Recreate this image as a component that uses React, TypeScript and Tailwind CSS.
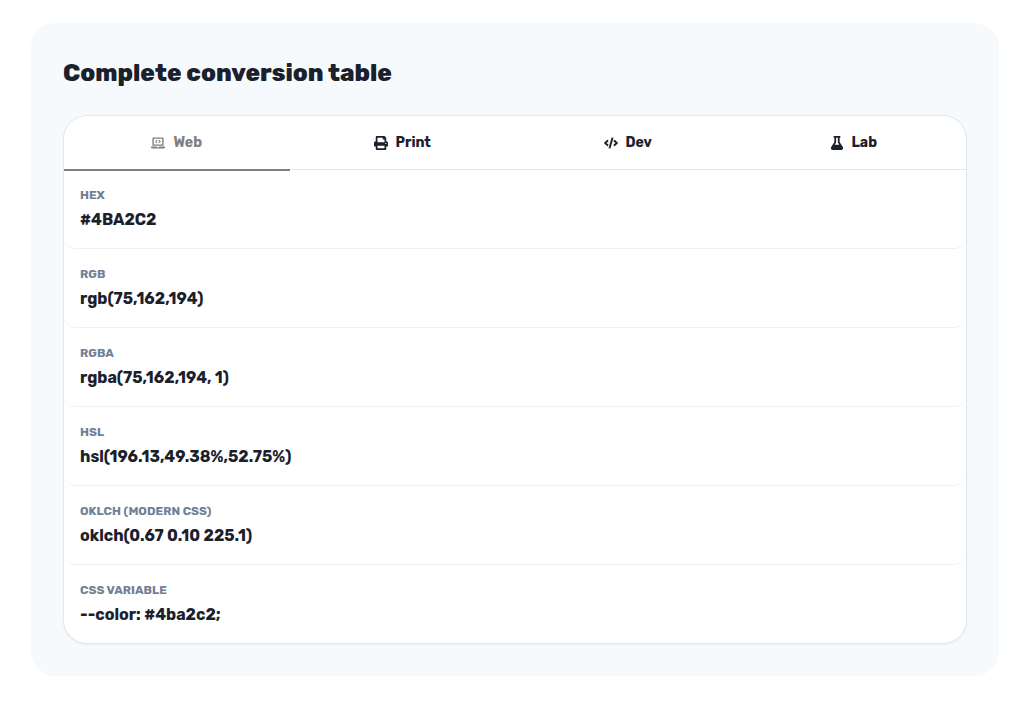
import { useState } from "react";
import clsx from "clsx";
import type { IconType } from "react-icons";
import { FaCode, FaFlask, FaLaptopCode, FaPrint } from "react-icons/fa";

interface Tab {
  id: string;
  label: string;
  Icon: IconType;
}

interface Format {
  name: string;
  value: string;
}

const tabs: Tab[] = [
  { id: "web", label: "Web", Icon: FaLaptopCode },
  { id: "print", label: "Print", Icon: FaPrint },
  { id: "dev", label: "Dev", Icon: FaCode },
  { id: "lab", label: "Lab", Icon: FaFlask },
];

const webFormats: Format[] = [
  { name: "HEX", value: "#4BA2C2" },
  { name: "RGB", value: "rgb(75,162,194)" },
  { name: "RGBA", value: "rgba(75,162,194, 1)" },
  { name: "HSL", value: "hsl(196.13,49.38%,52.75%)" },
  { name: "OKLCH (Modern CSS)", value: "oklch(0.67 0.10 225.1)" },
  { name: "CSS Variable", value: "--color: #4ba2c2;" },
];

export default function App() {
  const [active, setActive] = useState("web");

  return (
    <main className="bg-white py-[23px] pr-8 pl-[31px] font-['Rubik','Inter',sans-serif] text-[#1a202c]">
      <section className="rounded-3xl bg-[#f6fafd] p-8">
        <h2 className="mb-6 text-2xl leading-9 font-extrabold">Complete conversion table</h2>

        <div className="rounded-3xl border border-[#e2e8f0] bg-white shadow-xs">
          <div role="tablist" className="grid h-[54px] grid-cols-4 border-b border-[#e2e8f0]">
            {tabs.map(({ id, label, Icon }) => (
              <button
                key={id}
                id={`tab-${id}`}
                type="button"
                role="tab"
                aria-selected={active === id}
                onClick={() => setActive(id)}
                className={clsx(
                  "flex h-[55px] cursor-pointer items-center justify-center gap-2 border-b-2 text-sm font-bold",
                  active === id ? "border-[#808080] text-[#808080]" : "border-transparent"
                )}
              >
                <Icon size={14} />
                {label}
              </button>
            ))}
          </div>

          {/* Values */}
          <dl role="tabpanel" aria-labelledby={`tab-${active}`}>
            {webFormats.map(({ name, value }) => (
              <div key={name} className="rounded-xl border-b border-[#edf2f7] p-4 last:border-b-0">
                <dt className="text-xs leading-[18px] font-bold text-[#718096] uppercase">{name}</dt>
                <dd className="mt-1 text-base leading-6 font-bold">{value}</dd>
              </div>
            ))}
          </dl>
        </div>
      </section>
    </main>
  );
}
